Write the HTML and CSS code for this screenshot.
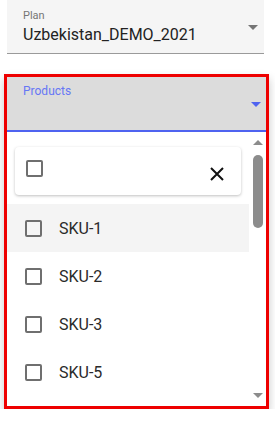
FILE: index.html
```html
<!DOCTYPE html>
<html>
	<head>
		<meta charset="utf-8">
		<title>Plan products</title>
		<link rel="stylesheet" href="styles.css">
	</head>
	<body>
		<div class="field plan">
			<div class="label">Plan</div>
			<div class="value">Uzbekistan_DEMO_2021</div>
			<span class="arrow"></span>
		</div>

		<div class="picker">
			<div class="field products">
				<div class="label">Products</div>
				<span class="arrow"></span>
			</div>

			<div class="menu">
				<div class="list">
					<div class="search">
						<span class="box"></span>
						<svg class="clear" width="14" height="14" viewBox="0 0 14 14">
							<path d="M1 1 L13 13 M13 1 L1 13" stroke="#111" stroke-width="2" fill="none"/>
						</svg>
					</div>
					<div class="item active"><span class="box"></span>SKU-1</div>
					<div class="item"><span class="box"></span>SKU-2</div>
					<div class="item"><span class="box"></span>SKU-3</div>
					<div class="item"><span class="box"></span>SKU-5</div>
				</div>
				<div class="scroll">
					<span class="up"></span>
					<span class="thumb"></span>
					<span class="down"></span>
				</div>
			</div>
		</div>
	</body>
</html>
```

FILE: styles.css
```css
body {
	margin: 0;
	background-color: #ffffff;
	font-family: Roboto, "Noto Sans", sans-serif;
	color: #222222;
}

.field {
	position: relative;
	box-sizing: border-box;
	padding: 9px 16px 0 16px;
}

.plan {
	margin: 0 11px 0 7px;
	height: 54px;
	background-color: #f5f5f5;
	border-bottom: 1px solid #9a9a9a;
}

.label {
	font-size: 11px;
	line-height: 13px;
	color: #757575;
}

.value {
	margin-top: 3px;
	font-size: 16px;
	line-height: 20px;
	color: #222222;
}

.arrow {
	position: absolute;
	right: 6px;
	top: 25px;
	width: 0;
	height: 0;
	border-left: 5px solid transparent;
	border-right: 5px solid transparent;
	border-top: 5px solid #757575;
}

.picker {
	margin: 20px 6px 0 4px;
	border: 3px solid #ee0000;
	box-shadow: 0 5px 9px rgba(0, 0, 0, 0.22);
}

.products {
	height: 55px;
	padding-top: 8px;
	background-color: #dcdcdc;
	border-bottom: 2px solid #4f63f0;
}

.products .label {
	font-size: 12px;
	color: #6677f5;
}

.products .arrow {
	top: 25px;
	right: 5px;
	border-top-color: #4f63f0;
}

.menu {
	display: flex;
	height: 274px;
	background-color: #ffffff;
	overflow: hidden;
}

.list {
	width: 242px;
	padding-top: 15px;
}

.search {
	display: flex;
	align-items: center;
	justify-content: space-between;
	box-sizing: border-box;
	height: 48px;
	margin: 0 8px 9px 8px;
	padding: 0 17px 0 11px;
	border-radius: 4px;
	background-color: #ffffff;
	box-shadow: 0 1px 3px rgba(0, 0, 0, 0.25);
}

.search .box {
	margin-top: -5px;
}

.clear {
	margin-top: 6px;
}

.box {
	display: inline-block;
	box-sizing: border-box;
	width: 17px;
	height: 17px;
	border: 2px solid #6f6f6f;
	border-radius: 2px;
}

.item {
	display: flex;
	align-items: center;
	height: 48px;
	padding-left: 18px;
	font-size: 16px;
	color: #2a2a2a;
}

.item .box {
	margin-right: 17px;
}

.item.active {
	background-color: #f4f4f4;
}

.scroll {
	display: flex;
	flex-direction: column;
	align-items: center;
	width: 17px;
	padding-top: 8px;
}

.up, .down {
	width: 0;
	height: 0;
	border-left: 5px solid transparent;
	border-right: 5px solid transparent;
}

.up {
	border-bottom: 5px solid #8c8c8c;
}

.down {
	margin-top: 165px;
	border-top: 5px solid #8c8c8c;
}

.thumb {
	width: 10px;
	height: 73px;
	margin-top: 10px;
	border-radius: 5px;
	background-color: #8c8c8c;
}
```
